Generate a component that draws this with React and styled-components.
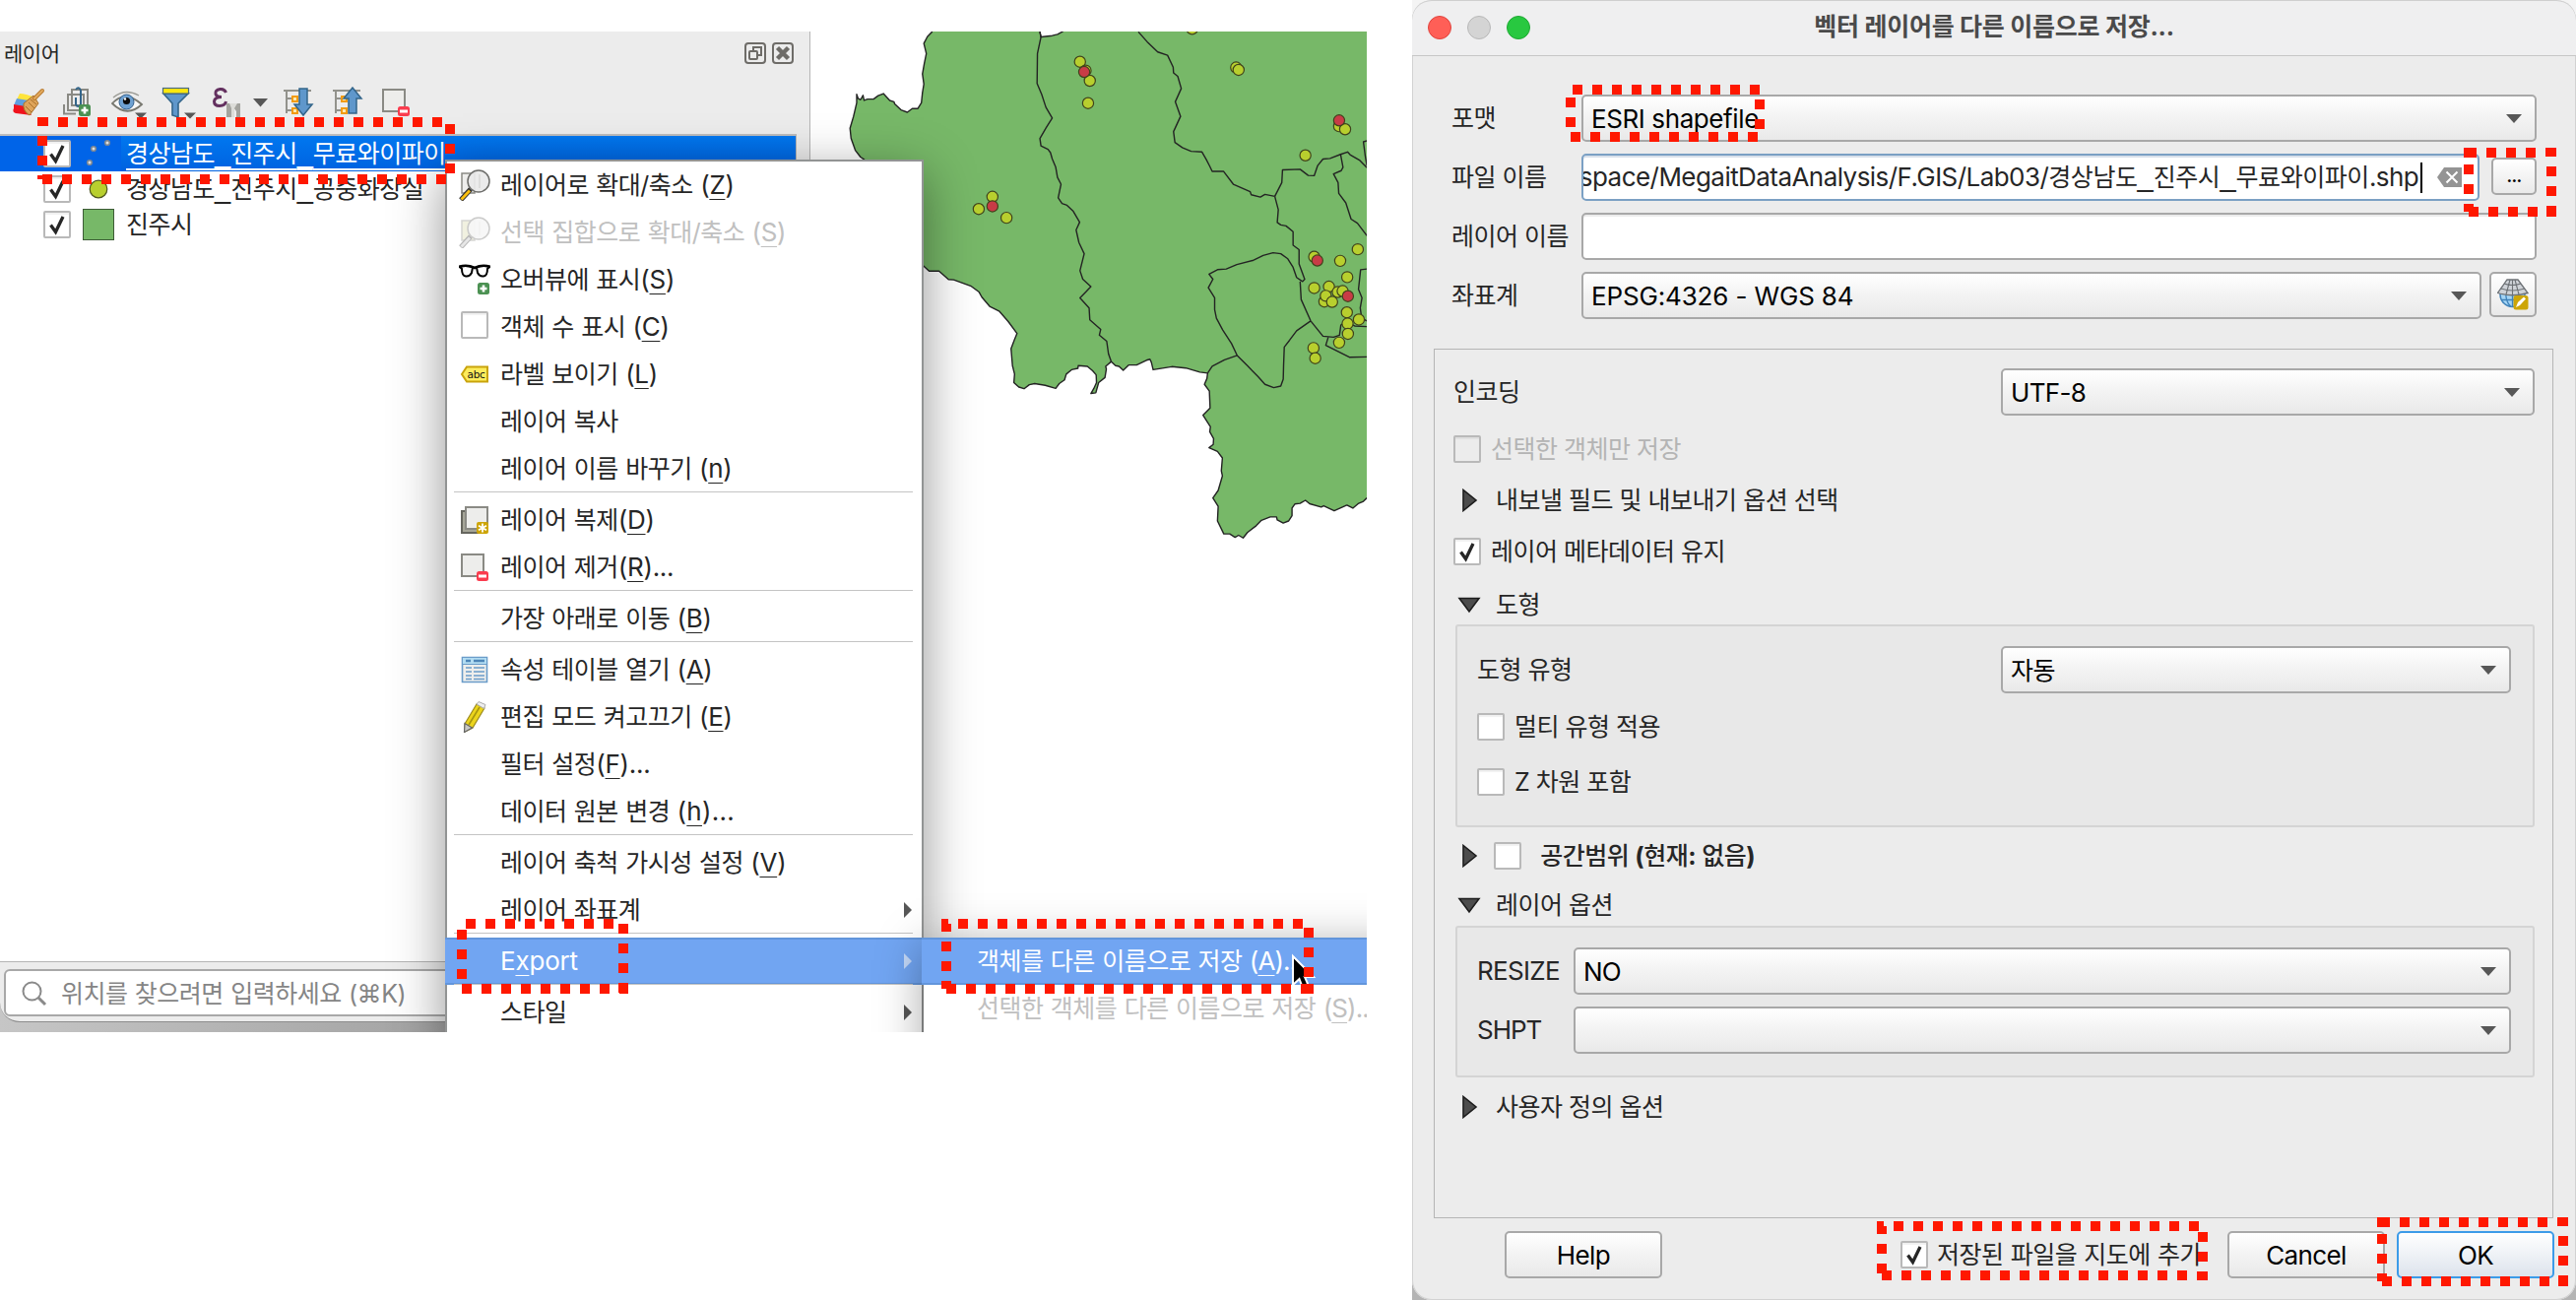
import React from "react";
import styled, { createGlobalStyle, css } from "styled-components";

const GlobalStyle = createGlobalStyle`
  * { box-sizing: border-box; }
  body {
    margin: 0;
    background: #fff;
    color: #262626;
    font: 25px/1 Inter, "Noto Sans CJK KR", sans-serif;
    letter-spacing: -0.5px;
    word-spacing: 0.8px;
    white-space: pre;
    overflow: hidden;
  }
`;

/* ---------- shared ---------- */

const Page = styled.main`
  position: relative;
  display: flex;
  width: 2616px;
  height: 1320px;
  gap: 46px;
`;

const Text = styled.span`
  line-height: 36px;
  color: ${(p) => p.$color || "inherit"};
  font-weight: ${(p) => p.$weight || 400};
`;

const Latin = styled.span`
  font-size: 26px;
  letter-spacing: ${(p) => (p.$track === undefined ? -0.4 : p.$track)}px;
`;

const Low = styled.span`
  font: 29px/0 "Liberation Sans", sans-serif;
  letter-spacing: 0;
`;

const Heavy = styled.span`
  font-weight: 700;
`;

const Key = styled.span`
  text-decoration: underline;
  text-decoration-thickness: 1px;
  text-underline-offset: 5px;
`;

const Box = styled.span`
  display: inline-flex;
  align-items: center;
  justify-content: center;
  flex: none;
  width: 28px;
  height: 28px;
  border: 2px solid #b9b9b9;
  border-radius: 2px;
  background: ${(p) => (p.$disabled ? "#ececec" : "#fff")};
  box-shadow: inset 0 2px 1px rgba(0, 0, 0, 0.06);
`;

function Check({ checked, disabled }) {
  return (
    <Box $disabled={disabled}>
      {checked && (
        <svg width="20" height="22" viewBox="0 0 20 22">
          <path d="M3.5 11.5 L8.5 18.5 L16 3" fill="none" stroke="#262626" strokeWidth="3.3" />
        </svg>
      )}
    </Box>
  );
}

/* ---------- layers window ---------- */

const Shot = styled.section`
  position: relative;
  display: flex;
  flex: none;
  width: 1388px;
  height: 1016px;
  margin-top: 32px;
  overflow: hidden;
  background: #fff;
`;

const Dock = styled.div`
  display: flex;
  flex-direction: column;
  flex: none;
  width: 823px;
  background: #ececec;
  border-right: 1px solid #b5b5b5;
`;

const DockTitle = styled.header`
  display: flex;
  align-items: center;
  height: 44px;
  padding: 0 16px 0 4px;
  font-size: 21px;
  gap: 6px;
`;

const DockName = styled.span`
  flex: 1;
`;

const Toolbar = styled.div`
  display: flex;
  height: 60px;
  padding: 12px 0 0 12px;
`;

const Tool = styled.span`
  flex: none;
  width: ${(p) => p.$w}px;
`;

const Tree = styled.div`
  width: 809px;
  height: 841px;
  border-top: 2px solid #bdbdbd;
  border-right: 1px solid #b5b5b5;
  border-bottom: 1px solid #b5b5b5;
  background: #fff;
`;

const TreeRow = styled.div`
  display: flex;
  align-items: center;
  height: 36px;
  padding-left: 44px;
  ${(p) =>
    p.$selected &&
    css`
      color: #fff;
      text-decoration: underline;
      text-decoration-thickness: 2px;
      text-underline-offset: 6px;
      background: linear-gradient(90deg, #0064e8 123px, transparent 123px),
        linear-gradient(#0077ef, #0062e0);
    `}
`;

const Symbol = styled.span`
  display: flex;
  justify-content: center;
  width: 56px;
`;

const StatusBar = styled.footer`
  flex: none;
  height: 61px;
  padding: 7px 0 0 4px;
  background: #ececec;
  border-bottom-left-radius: 20px;
  border-bottom: 1px solid #8c8c8c;
`;

const Desk = styled.div`
  display: flex;
  flex-direction: column;
  background: linear-gradient(90deg, #c6c6c6, #a2a2a2 452px);
  height: 71px;
`;

const Search = styled.div`
  display: flex;
  align-items: center;
  gap: 14px;
  height: 48px;
  padding: 1px 0 0 16px;
  border: 2px solid #a8a8a8;
  border-radius: 6px;
  background: #fff;
  color: #858585;
`;

const MapCanvas = styled.div`
  flex: 1;
  background: #fff;
`;

/* ---------- context menu ---------- */

const Menu = styled.nav`
  position: absolute;
  left: 452px;
  top: 130px;
  width: 486px;
  height: 900px;
  padding: 0;
  border: 2px solid #929494;
  background: #fff;
  box-shadow: 0 14px 50px rgba(0, 0, 0, 0.42);
`;

const SubMenu = styled(Menu)`
  left: 938px;
  top: 920px;
  width: 520px;
  height: 200px;
  border: 0;
  box-shadow: 0 8px 44px rgba(0, 0, 0, 0.35);
`;

const MenuRow = styled.div`
  display: flex;
  align-items: center;
  height: 48px;
  padding: 0 10px ${(p) => (p.$sub ? 0 : 1)}px ${(p) => (p.$sub ? 54 : 12)}px;
  color: ${(p) => (p.$disabled ? "#c0c0c0" : "#262626")};
  ${(p) =>
    p.$active &&
    css`
      margin: 0 -2px;
      padding-left: ${p.$sub ? 56 : 14}px;
      padding-right: 12px;
      color: #fff;
      background: #71a5f2;
      box-shadow: inset 0 2px #6295db, inset 0 -2px #6295db;
    `}
`;

const MenuIcon = styled.span`
  width: 32px;
  height: 32px;
  margin: 0 10px 0 0;
`;

const CheckSlot = styled.span`
  padding-left: 2px;
`;

const MenuText = styled(Text)`
  flex: 1;
`;

const Divider = styled.div`
  height: 5px;
  margin: -1px 9px 0 7px;
  border-top: 1px solid #c4c4c4;
`;

/* ---------- dialog ---------- */

const DialogBack = styled.section`
  flex: none;
  width: 1182px;
  height: 1320px;
  background: linear-gradient(#f4f4f4 50%, #b4b4b4 50%);
`;

const Dialog = styled.div`
  display: flex;
  flex-direction: column;
  height: 1320px;
  border-radius: 20px;
  background: #ececec;
  box-shadow: inset 0 0 0 1px #d2d2d2;
  word-spacing: 0;
`;

const TitleBar = styled.header`
  display: flex;
  align-items: center;
  height: 57px;
  padding: 0 16px;
  border-bottom: 1px solid #c6c6c6;
  border-radius: 20px 20px 0 0;
  background: #efeff0;
  box-shadow: inset 0 1px #cfcfcf;
`;

const Light = styled.span`
  width: 24px;
  height: 24px;
  margin-right: 16px;
  border-radius: 50%;
  border: 1px solid ${(p) => p.$edge};
  background: ${(p) => p.$fill};
`;

const Title = styled.h1`
  flex: 1;
  margin: -2px 120px 0 0;
  text-align: center;
  font-size: 25px;
  font-weight: 700;
  letter-spacing: -0.25px;
  color: #4a4a4a;
`;

const Form = styled.div`
  display: flex;
  flex-direction: column;
  gap: 12px;
  padding: 39px 40px 0;
`;

const FormRow = styled.div`
  display: flex;
  height: 48px;
  align-items: center;
`;

const Label = styled(Text)`
  width: ${(p) => p.$w}px;
  flex: none;
`;

const ComboBox = styled.div`
  display: flex;
  align-items: center;
  justify-content: space-between;
  ${(p) => (p.$w ? `width: ${p.$w}px; margin-left: auto;` : "flex: 1;")}
  height: 48px;
  padding: 1px 13px 0 8px;
  border: 2px solid #a8a8a8;
  border-radius: 5px;
  background: linear-gradient(#fff, #f4f4f4 45%, #e9e9e9);
  color: #000;
`;

const Field = styled.div`
  display: flex;
  align-items: center;
  justify-content: flex-end;
  flex: 1;
  min-width: 0;
  height: 48px;
  overflow: hidden;
  padding-right: 16px;
  border: 2px solid ${(p) => (p.$focus ? "#7ba0c4" : "#a8a8a8")};
  border-radius: 5px;
  background: #fff;
  box-shadow: inset 0 2px ${(p) => (p.$focus ? "#d8e0ea" : "#ececec")};

  & > svg {
    flex: none;
  }
`;

const PathText = styled(Text)`
  flex: none;
  letter-spacing: -0.44px;
`;

const Caret = styled.span`
  flex: none;
  width: 2px;
  height: 31px;
  margin: 0 15px 0 2px;
  background: #000;
`;

const SmallButton = styled.button`
  display: flex;
  align-items: center;
  justify-content: center;
  flex: none;
  width: ${(p) => p.$w}px;
  height: ${(p) => p.$h}px;
  margin: 0 0 ${(p) => p.$lift || 0}px ${(p) => p.$gap}px;
  padding: 0;
  border: 2px solid #a8a8a8;
  border-radius: 5px;
  background: linear-gradient(#fff, #e9e9e9);
  font: 700 17px/1 Inter, sans-serif;
  letter-spacing: -0.6px;
  color: #000;
`;

const Panel = styled.div`
  height: 883px;
  margin: 30px 23px 0 22px;
  padding: 19px 18px 0 19px;
  border: 1px solid #b5b5b5;
`;

const Line = styled.div`
  display: flex;
  align-items: center;
  height: ${(p) => p.$h}px;
  padding-left: ${(p) => p.$indent || 0}px;
  gap: ${(p) => (p.$gap === undefined ? 10 : p.$gap)}px;
  & > ${Text} {
    padding-bottom: 1px;
  }
`;

const Group = styled.div`
  margin-left: 2px;
  height: ${(p) => p.$h}px;
  padding: 20px 22px 0 20px;
  border: 2px solid #d4d4d4;
  border-radius: 3px;
  background: #e8e8e8;
`;

const Footer = styled.footer`
  display: flex;
  height: 48px;
  align-items: center;
  margin: 13px 22px 0 94px;
`;

const Button = styled.button`
  width: 160px;
  height: 48px;
  margin: 0 0 0 ${(p) => p.$gap || 0}px;
  padding: 1px 0 0;
  border: 2px solid ${(p) => (p.$primary ? "#3c9be8" : "#a8a8a8")};
  border-radius: 5px;
  background: ${(p) =>
    p.$primary ? "linear-gradient(#fff, #f0f3f7 45%, #dde3ec)" : "linear-gradient(#fff, #f4f4f4 45%, #e9e9e9)"};
  font: inherit;
  font-size: 26px;
  letter-spacing: -0.6px;
  color: #000;
`;

const AddToMap = styled.label`
  display: flex;
  align-items: center;
  width: 332px;
  gap: 9px;
  margin-left: 242px;
  word-spacing: 0.6px;
`;

const Overlay = styled.svg`
  position: absolute;
  left: 0;
  top: 0;
  pointer-events: none;
`;

/* ---------- drawings ---------- */

const Down = () => (
  <svg width="16" height="9" viewBox="0 0 16 9">
    <path d="M0 0H16L8 9Z" fill="#575757" />
  </svg>
);

const Combo = ({ w, track, children }) => (
  <ComboBox $w={w}>
    <Text>{track === undefined ? children : <Latin $track={track}>{children}</Latin>}</Text>
    <Down />
  </ComboBox>
);

const Disclosure = ({ open }) => (
  <svg width="24" height="24" viewBox="0 0 24 24">
    <path
      d={open ? "M2 5.5H22L12 19Z" : "M6 1.5V22.5L19 12Z"}
      fill="#4c4c4c"
      stroke="#1d1d1d"
      strokeWidth="1.6"
    />
  </svg>
);

const RightArrow = ({ color }) => (
  <svg width="8" height="16" viewBox="0 0 8 16">
    <path d="M0 0L8 8L0 16Z" fill={color} />
  </svg>
);

const FloatIcon = () => (
  <svg width="22" height="22" viewBox="0 0 22 22" fill="none" stroke="#6e6c68" strokeWidth="2">
    <rect x="1" y="1" width="20" height="20" rx="3" />
    <rect x="5" y="9" width="8" height="8" rx="1" />
    <path d="M9 9V5H17V13H13" />
  </svg>
);

const CloseIcon = () => (
  <svg width="22" height="22" viewBox="0 0 22 22" fill="none" stroke="#6e6c68" strokeWidth="2">
    <rect x="1" y="1" width="20" height="20" rx="3" />
    <path d="M5.5 5.5L16.5 16.5M16.5 5.5L5.5 16.5" strokeWidth="4.4" />
  </svg>
);

const Svg = (p) => (
  <svg width={p.w} height="34" viewBox={`0 0 ${p.w} 34`} fill="none">
    {p.children}
  </svg>
);

const BrushIcon = () => (
  <Svg w={34}>
    <path d="M8 7Q14 7 26 12L16 20L5 13Z" fill="#ffe43c" />
    <path d="M5 12L17 14L13 22L2 19Z" fill="#5f9fe0" />
    <path d="M2 18L14 20L20 29L4 27Q0 26 2 22Z" fill="#f0121c" />
    <path d="M12 17L22 9L27 17L18 29Q11 25 12 17Z" fill="#dfa45a" stroke="#a8702a" />
    <path d="M14 20L20 26M17 16L23 22M19 13L25 18" stroke="#a8702a" />
    <path d="M23 12L31 4" stroke="#b87a2e" strokeWidth="4" strokeLinecap="round" />
    <path d="M23 12L31 4" stroke="#e3aa5e" strokeWidth="2" strokeLinecap="round" />
  </Svg>
);

const Plus = ({ x, y }) => (
  <g>
    <rect x={x} y={y} width="12" height="12" rx="2.5" fill="#4b9152" />
    <path d={`M${x + 6} ${y + 2.5}v7M${x + 2.5} ${y + 6}h7`} stroke="#fff" strokeWidth="2.6" />
  </g>
);

const AddGroupIcon = () => (
  <Svg w={34}>
    <path d="M3 18V27.500H15" stroke="#8a8a84" strokeWidth="2" />
    <rect x="7" y="8" width="16" height="16" stroke="#8a8a84" strokeWidth="2" />
    <rect x="11" y="3" width="16" height="16" stroke="#8a8a84" strokeWidth="2" />
    <path d="M15 11V18Q17 22 20 18V4Q18 -1 15 3" stroke="#33658a" strokeWidth="2" />
    <Plus x={18} y={18} />
  </Svg>
);

const EyeIcon = () => (
  <Svg w={38}>
    <path d="M1 17Q14 3 31 18Q16 32 1 17Z" fill="#f7f7f7" stroke="#77776f" strokeWidth="1.8" />
    <path d="M2 11Q14 1 28 9" stroke="#9a9a94" strokeWidth="1.4" />
    <circle cx="15.500" cy="15.500" r="7.500" fill="#6ea1d2" stroke="#33608c" />
    <circle cx="15.500" cy="14.500" r="3.600" fill="#0a0a0a" />
    <circle cx="14" cy="12.500" r="1.200" fill="#fff" />
    <path d="M24 26.500H36L30 32.500Z" fill="#575757" />
  </Svg>
);

const FilterIcon = () => (
  <Svg w={38}>
    <path d="M2 7L11 17V29L17 31V17L27 7Z" fill="#5f97cb" stroke="#33658a" strokeWidth="1.6" />
    <rect x="1.500" y="1.500" width="26" height="5.500" fill="#fce80d" stroke="#4a6a80" strokeWidth="1.200" />
    <path d="M23 26.500H35L29 32.500Z" fill="#575757" />
  </Svg>
);

const EpsilonIcon = () => (
  <Svg w={58}>
    <path
      d="M14.500 6Q13 2 8.500 2.500Q3 3.500 4 7.500Q5 10.500 10 10.500Q3 10.500 2.500 15Q2.500 19.500 8 19.500Q13.500 19.500 14.500 15"
      stroke="#63305f"
      strokeWidth="3"
    />
    <path d="M15 17H29V31H25V25L20 18V31H15Z" fill="#a3a39e" />
    <path d="M18 17H26L23 22V31H20V22Z" fill="#dcdcd8" />
    <path d="M42 12H57L49.500 20.500Z" fill="#575757" />
  </Svg>
);

const TreeIcon = ({ up }) => (
  <Svg w={34}>
    <path d="M0 4H28M3 4V27M3 12H8M3 24H8" stroke="#92928c" strokeWidth="2" />
    <rect x="9" y="10" width="5" height="5" stroke="#f29b11" strokeWidth="2" fill="#fce9b0" />
    <rect x="9" y="22" width="5" height="5" stroke="#f29b11" strokeWidth="2" fill="#fce9b0" />
    <path
      d={up ? "M20 1L29 12H24V27H16V12H11Z" : "M16 2H24V18H29L20 29L11 18H16Z"}
      fill="#5f97cb"
      stroke="#33658a"
      strokeWidth="1.500"
    />
  </Svg>
);

const RemoveIcon = () => (
  <Svg w={32}>
    <rect x="2" y="3" width="22" height="22" fill="#ededeb" stroke="#8a8a84" strokeWidth="2" />
    <rect x="17" y="20" width="12" height="10" rx="2.500" fill="#fa3c4e" />
    <rect x="19" y="23.500" width="8" height="3" fill="#fff" />
  </Svg>
);

const ZoomIcon = ({ faded }) => (
  <svg width="32" height="32" viewBox="0 0 32 32" fill="none" opacity={faded ? 0.35 : 1}>
    <path d="M3 4H16V24H3Z" fill={faded ? "#d9d9a8" : "#eeeeec"} stroke="#8a8a84" strokeWidth="1.500" />
    <path d="M12 20L2 31" stroke="#333" strokeWidth="5" />
    <path d="M11 21.500L2.500 30.500" stroke={faded ? "#bbb" : "#fcc00d"} strokeWidth="2.800" />
    <circle cx="20" cy="12" r="11" fill="#e9e9e9" fillOpacity="0.92" stroke="#6d6d6a" strokeWidth="1.500" />
    <path d="M21 5V19" stroke="#cfcfcc" />
  </svg>
);

const GlassesIcon = () => (
  <svg width="32" height="32" viewBox="0 0 32 32" fill="none">
    <path d="M1 3Q7 1 14 3.500L13 9Q11 13 7 12.500Q3 12 3 5ZM18 3.500Q25 1 31 3L29 5Q29 12 25 12.500Q21 13 19 9Z" stroke="#000" strokeWidth="2" />
    <path d="M0 3Q8 0 16 4Q24 0 32 3" stroke="#000" strokeWidth="2.600" />
    <Plus x={19} y={19} />
  </svg>
);

const LabelIcon = () => (
  <svg width="32" height="32" viewBox="0 0 32 32">
    <path d="M3 16L8 8.500H29V23.500H8Z" fill="#fcec5c" stroke="#c9a30b" strokeWidth="2" />
    <text x="8.500" y="20" fontFamily="DejaVu Sans" fontSize="10.500" letterSpacing="-0.3" fill="#111">abc</text>
  </svg>
);

const DuplicateIcon = () => (
  <svg width="32" height="32" viewBox="0 0 32 32">
    <path d="M3 7H22V29H3Z" fill="#a6a698" stroke="#66665e" strokeWidth="2" />
    <path d="M7 3H29V25H7Z" fill="#ededeb" stroke="#8a8a84" strokeWidth="2" />
    <rect x="18" y="18" width="12" height="12" rx="2" fill="#cda507" />
    <path d="M24 19.500V28.500M20 21.700L28 26.300M28 21.700L20 26.300" stroke="#fff" strokeWidth="1.800" />
  </svg>
);

const RemoveLayerIcon = () => (
  <svg width="32" height="32" viewBox="0 0 32 32">
    <path d="M3 3H25V25H3Z" fill="#ededeb" stroke="#8a8a84" strokeWidth="2" />
    <rect x="18" y="20" width="12" height="10" rx="2.500" fill="#fa3c4e" />
    <rect x="20" y="23.500" width="8" height="3" fill="#fff" />
  </svg>
);

const TableIcon = () => (
  <svg width="32" height="32" viewBox="0 0 32 32">
    <path d="M3.500 3.500H28.500V28.500H3.500Z" fill="#eeeeec" stroke="#6a9cc9" strokeWidth="1.600" />
    <path d="M4 4H28V10H4Z" fill="#b2dcf2" />
    <path d="M7 7H12M15 7H26" stroke="#4e86b8" strokeWidth="2.400" />
    <path d="M4 10.500H28" stroke="#6a9cc9" />
    <path d="M7 14H13M15 14H26M7 18H13M15 18H26M7 22H13M15 22H26M7 25.500H13M15 25.500H26" stroke="#6a9cc9" strokeWidth="1.600" />
  </svg>
);

const PencilIcon = () => (
  <svg width="32" height="32" viewBox="0 0 32 32">
    <path d="M6 23L18 3L26 7L14 27L6 31Z" fill="#ecd51c" stroke="#9c8a1e" strokeWidth="1.200" />
    <path d="M10 24L21 6" stroke="#a8960f" strokeWidth="1.600" />
    <path d="M18 3L20 0.500L27 3.500L25.500 7.500Z" fill="#eee" stroke="#aaa" />
    <path d="M6 22.500L13.500 27L5.500 31.500Z" fill="#c9c9c5" stroke="#666" strokeWidth="1.200" />
  </svg>
);

const SearchIcon = () => (
  <svg width="26" height="26" viewBox="0 0 26 26" fill="none" stroke="#8a8a8a" strokeWidth="2">
    <circle cx="10.500" cy="10.500" r="9" />
    <path d="M17 17L24 24" strokeWidth="3" />
  </svg>
);

const ClearIcon = () => (
  <svg width="25" height="20" viewBox="0 0 25 20">
    <path d="M7 0H25V20H7L0 10Z" fill="#949494" />
    <path d="M9.500 4.500L20.500 15.500M20.500 4.500L9.500 15.500" stroke="#fff" strokeWidth="2" />
  </svg>
);

const CrsIcon = () => (
  <svg width="32" height="32" viewBox="0 0 32 32" fill="none">
    <circle cx="15.500" cy="16" r="12.500" fill="#a5d5f5" stroke="#3f82ba" strokeWidth="1.500" />
    <path d="M15.500 14V29M9 14Q8 23 14 28.500M4 21.500H24" stroke="#3f82ba" strokeWidth="1.300" />
    <path d="M10 1H21L31 14.500Q15 19 0.500 14.500Z" fill="#cfd3d8" stroke="#6e7276" strokeWidth="1.300" />
    <path d="M7 5Q15 8 24 5M4 10Q15 14 28 10M13 1L9 16M18 1L22 16M15.500 1V17" stroke="#6e7276" strokeWidth="1.100" />
    <rect x="16.500" y="17" width="15" height="14.500" rx="2.500" fill="#cda507" />
    <path d="M19 29L21 24L27 18.500L29 20.500L23 27Z" fill="#fff" />
  </svg>
);

const PointsSymbol = () => (
  <svg width="32" height="32" viewBox="0 0 32 32" fill="#ddd" stroke="#7b8794" strokeWidth="1.600">
    <circle cx="7" cy="25" r="2.300" />
    <circle cx="11" cy="11" r="2.300" />
    <circle cx="25" cy="5" r="2.300" />
  </svg>
);

const CircleSymbol = () => (
  <svg width="20" height="20" viewBox="0 0 20 20">
    <circle cx="10" cy="10" r="8.800" fill="#b8cf2e" stroke="#4e561e" strokeWidth="1.200" />
  </svg>
);

const PolygonSymbol = () => (
  <svg width="32" height="32" viewBox="0 0 32 32">
    <rect x="0.500" y="0.500" width="31" height="31" fill="#77b868" stroke="#3d5c36" />
  </svg>
);

const DISTRICT =
  "M298 36L285 50L275 70L282 100L276 130L271 160L275 190L271 215L268 245L258 262L242 262L228 273L210 266L192 248L190 242L178 238L160 218L145 224L132 234L115 234L105 238L102 223L95 236L88 232L84 220L84 245L75 285L65 320L68 350L80 385L95 405L105 412L150 500L200 640L274 726L290 741L318 741L330 752L345 766L360 767L410 786L432 803L440 818L462 845L490 860L515 890L540 925L532 945L523 970L527 1020L533 1045L531 1070L545 1083L560 1088L575 1076L590 1073L620 1078L650 1087L660 1073L675 1062L680 1045L695 1032L713 1028L714 1020L740 1022L755 1035L765 1047L766 1070L758 1088L750 1102L764 1100L772 1070L790 1055L794 1030L792 1022L808 1008L820 1020L830 1022L842 1034L858 1018L880 1018L908 1004L918 1001L922 1010L927 1032L980 1023L1020 1027L1060 1039L1082 1042L1080 1058L1073 1075L1087 1095L1089 1145L1069 1166L1090 1200L1088 1215L1099 1235L1098 1252L1086 1262L1110 1273L1124 1292L1121 1330L1124 1345L1112 1388L1097 1410L1112 1435L1110 1478L1128 1516L1145 1516L1160 1526L1170 1520L1183 1528L1195 1512L1220 1492L1235 1476L1260 1466L1278 1466L1280 1475L1297 1484L1312 1478L1322 1462L1322 1440L1330 1428L1345 1426L1360 1417L1372 1427L1405 1437L1412 1433L1442 1448L1478 1431L1495 1440L1510 1427L1525 1420L1535 1410L1560 1400L1560 20L690 20L668 36L655 43L640 47L608 51L605 36L600 20L300 20Z";

const BOUNDARIES = [
  "M605 36L608 51L598 100L597 188L610 220L622 258L640 290L622 320L605 350L608 372L628 382L635 392L640 410L650 435L655 465L665 485L657 525L668 542L682 547L700 565L718 597L708 620L716 657L731 690L719 740L727 765L750 787L738 800L719 820L745 850L747 885L778 913L774 930L795 948L800 985L808 1008",
  "M885 36L910 65L940 95L968 105L984 140L985 157L997 167L1007 203L990 242L1005 285L985 330L989 362L1010 377L1035 388L1066 390L1078 412L1088 432L1095 447L1127 447L1155 485L1203 507L1206 516L1232 523L1245 515L1273 521",
  "M1273 521L1293 480L1295 443L1345 441L1368 459L1385 460L1395 430L1410 411L1430 409L1460 397L1480 390L1487 398L1515 415L1535 436",
  "M1460 397L1467 435L1462 445L1440 455L1453 480L1455 512L1475 540L1490 588L1508 600L1535 637",
  "M1273 521L1283 560L1280 598L1290 605L1305 608L1325 625L1325 665L1342 678L1342 720L1358 765L1352 772L1335 760L1325 730L1310 705L1290 690L1268 687L1240 695L1210 710L1165 722L1135 735L1110 737L1086 750L1097 765L1084 790L1102 820L1102 855L1107 880L1125 915L1150 955L1166 990L1195 1020L1225 1052L1245 1075L1270 1085L1290 1080L1297 1060L1298 1020L1300 965L1315 945L1335 917L1375 888",
  "M1345 772L1348 825L1375 888L1410 933L1440 936L1457 930L1461 900L1475 890L1500 903L1535 905",
  "M1425 936L1418 960L1485 995L1535 994",
  "M1082 1042L1095 1022L1130 1003L1166 990",
  "M1535 735L1517 737L1511 795L1521 820L1516 850L1520 880L1535 888",
  "M1535 357L1525 360L1530 400L1535 430",
];

const TOILETS = [
  [719, 124], [735, 150], [747, 180], [742, 246], [1038, 27], [1163, 141], [1170, 148], [1456, 314], [1473, 323],
  [1360, 400], [470, 522], [431, 558], [510, 584], [1385, 699], [1459, 711], [1509, 677], [1479, 759], [1385, 791],
  [1427, 787], [1452, 803], [1466, 800], [1414, 831], [1418, 814], [1436, 832], [1478, 863], [1512, 884],
  [1480, 896], [1481, 926], [1456, 952], [1383, 968], [1388, 998],
];

const WIFI = [[731, 154], [1456, 297], [470, 550], [1394, 710], [1481, 815]];

const Pin = ({ at, fill }) => (
  <ellipse cx={at[0]} cy={at[1]} rx="15.700" ry="16.300" fill={fill} stroke="#40431c" strokeWidth="1.200" vectorEffect="non-scaling-stroke" />
);

const JinjuMap = () => (
  <svg width="565" height="1016" viewBox="823 32 565 1016" strokeLinejoin="round">
    <g transform="translate(840 20) scale(0.3571 0.3444)">
      <path d={DISTRICT} fill="#77b868" stroke="#232323" strokeWidth="1.400" vectorEffect="non-scaling-stroke" />
      {BOUNDARIES.map((d) => (
        <path key={d} d={d} fill="none" stroke="#232323" strokeWidth="1.400" vectorEffect="non-scaling-stroke" />
      ))}
      {TOILETS.map((p) => (
        <Pin key={p.join()} at={p} fill="#b8cf2e" />
      ))}
      {WIFI.map((p) => (
        <Pin key={p.join()} at={p} fill="#c83c46" />
      ))}
    </g>
  </svg>
);

const Cursor = () => (
  <path d="M1313 971V1000L1319.500 994L1324 1006L1330 1003.500L1325 992H1334Z" fill="#000" stroke="#fff" strokeWidth="2" />
);

/* Each entry is a run of 10px squares: x, y, count, direction */
const RUNS = [
  [59, 119, 20, "h"], [43, 177, 21, "h"], [452, 126, 3, "v"], [38, 138, 2, "v"],
  [473, 933, 8, "h"], [469, 999, 8, "h"], [628, 938, 4, "v"], [464, 944, 3, "v"],
  [973, 933, 18, "h"], [961, 999, 18, "h"], [1324, 942, 3, "v"], [956, 956, 2, "v"],
  [1597, 86, 10, "h"], [1595, 134, 10, "h"], [1782, 101, 2, "v"], [1590, 99, 2, "v"],
  [2525, 150, 3, "h"], [2507, 210, 4, "h"], [2586, 169, 2, "v"], [2502, 167, 2, "v"],
  [1923, 1240, 16, "h"], [1911, 1290, 16, "h"], [2232, 1251, 2, "v"], [1906, 1263, 2, "v"],
  [2437, 1236, 8, "h"], [2419, 1296, 9, "h"], [2598, 1255, 2, "v"], [2414, 1253, 2, "v"],
];

/* Clipped squares where two sides meet: x, y, width, height */
const CORNERS = [
  [38, 119, 11, 9], [38, 178, 5, 4],
  [629, 999, 9, 10],
  [956, 933, 7, 10], [956, 938, 10, 8], [956, 996, 10, 8], [1321, 999, 13, 10],
  [2502, 150, 13, 10], [2502, 150, 10, 7], [2585, 150, 11, 9], [2502, 207, 10, 8], [2586, 209, 10, 11],
  [1906, 1240, 7, 10], [1906, 1245, 10, 8], [1906, 1283, 10, 10], [2231, 1291, 11, 9],
  [2414, 1236, 13, 10], [2597, 1236, 11, 9], [2598, 1295, 10, 11], [2414, 1293, 10, 8],
];

const Highlights = () => (
  <Overlay width="2616" height="1320" viewBox="0 0 2616 1320">
    <Cursor />
    <g fill="#ff1800" shapeRendering="crispEdges">
      {RUNS.flatMap(([x, y, n, dir]) =>
        Array.from({ length: n }, (_, i) => (
          <rect
            key={`${x}-${y}-${i}`}
            x={dir === "h" ? x + i * 20 : x}
            y={dir === "v" ? y + i * 20 : y}
            width="10"
            height="10"
          />
        ))
      )}
      {CORNERS.map(([x, y, w, h]) => (
        <rect key={`${x}-${y}-${w}-${h}`} x={x} y={y} width={w} height={h} />
      ))}
    </g>
  </Overlay>
);

/* ---------- data ---------- */

const TOOLS = [
  [BrushIcon, 50], [AddGroupIcon, 51], [EyeIcon, 51], [FilterIcon, 51], [EpsilonIcon, 73],
  [TreeIcon, 50], [() => <TreeIcon up />, 49], [RemoveIcon, 32],
];

/* t: text before the mnemonic tail, opening part, mnemonic letter, rest */
const MENU = [
  { icon: <ZoomIcon />, t: ["레이어로 확대/축소 ", "(", "Z", ")"] },
  { icon: <ZoomIcon faded />, t: ["선택 집합으로 확대/축소 ", "(", "S", ")"], disabled: true },
  { icon: <GlassesIcon />, t: ["오버뷰에 표시", "(", "S", ")"] },
  { icon: <CheckSlot><Check /></CheckSlot>, t: ["객체 수 표시 ", "(", "C", ")"] },
  { icon: <LabelIcon />, t: ["라벨 보이기 ", "(", "L", ")"] },
  { t: ["레이어 복사"] },
  { t: ["레이어 이름 바꾸기 ", "(", "n", ")"] },
  null,
  { icon: <DuplicateIcon />, t: ["레이어 복제", "(", "D", ")"] },
  { icon: <RemoveLayerIcon />, t: ["레이어 제거", "(", "R", ")..."] },
  null,
  { t: ["가장 아래로 이동 ", "(", "B", ")"] },
  null,
  { icon: <TableIcon />, t: ["속성 테이블 열기 ", "(", "A", ")"] },
  { icon: <PencilIcon />, t: ["편집 모드 켜고끄기 ", "(", "E", ")"] },
  { t: ["필터 설정", "(", "F", ")..."] },
  { t: ["데이터 원본 변경 ", "(", "h", ")..."], track: 0.3 },
  null,
  { t: ["레이어 축척 가시성 설정 ", "(", "V", ")"] },
  { t: ["레이어 좌표계"], arrow: "#575757" },
  null,
  { t: ["", "E", "x", "port"], arrow: "#c3d8f8", active: true, track: -0.2 },
  null,
  { t: ["스타일"], arrow: "#575757" },
];

const Mnemonic = ({ t, track = -0.3 }) => (
  <MenuText>
    {t[0]}
    {t[2] && (
      <Latin $track={track}>
        {t[1]}
        <Key>{t[2]}</Key>
        {t[3]}
      </Latin>
    )}
  </MenuText>
);

export default function App() {
  return (
    <Page>
      <GlobalStyle />
      <Shot>
        <Dock>
          <DockTitle>
            <DockName>레이어</DockName>
            <FloatIcon />
            <CloseIcon />
          </DockTitle>
          <Toolbar>
            {TOOLS.map(([Icon, w], i) => (
              <Tool key={i} $w={w}>
                <Icon />
              </Tool>
            ))}
          </Toolbar>
          <Tree>
            <TreeRow $selected>
              <Check checked />
              <Symbol><PointsSymbol /></Symbol>
              <Text>경상남도<Low>_</Low>진주시<Low>_</Low>무료와이파이</Text>
            </TreeRow>
            <TreeRow>
              <Check checked />
              <Symbol><CircleSymbol /></Symbol>
              <Text>경상남도<Low>_</Low>진주시<Low>_</Low>공중화장실</Text>
            </TreeRow>
            <TreeRow>
              <Check checked />
              <Symbol><PolygonSymbol /></Symbol>
              <Text>진주시</Text>
            </TreeRow>
          </Tree>
          <Desk>
            <StatusBar>
              <Search>
                <SearchIcon />
                <Text>위치를 찾으려면 입력하세요 (⌘K)</Text>
              </Search>
            </StatusBar>
          </Desk>
        </Dock>
        <MapCanvas>
          <JinjuMap />
        </MapCanvas>
        <Menu>
          {MENU.map((m, i) =>
            m ? (
              <MenuRow key={i} $disabled={m.disabled} $active={m.active}>
                <MenuIcon>{m.icon}</MenuIcon>
                <Mnemonic t={m.t} track={m.track} />
                {m.arrow && <RightArrow color={m.arrow} />}
              </MenuRow>
            ) : (
              <Divider key={i} />
            )
          )}
        </Menu>
        <SubMenu>
          <MenuRow $sub $active>
            <Mnemonic t={["객체를 다른 이름으로 저장 ", "(", "A", ")..."]} track={-0.9} />
          </MenuRow>
          <MenuRow $sub $disabled>
            <Mnemonic t={["선택한 객체를 다른 이름으로 저장 ", "(", "S", ")..."]} track={-0.9} />
          </MenuRow>
        </SubMenu>
      </Shot>

      <DialogBack>
        <Dialog>
          <TitleBar>
            <Light $fill="#ff5f57" $edge="#e0443e" />
            <Light $fill="#d4d4d4" $edge="#b8b8b8" />
            <Light $fill="#28c840" $edge="#1fa833" />
            <Title>벡터 레이어를 다른 이름으로 저장...</Title>
          </TitleBar>
          <Form>
            <FormRow>
              <Label $w={132}>포맷</Label>
              <Combo track={-0.4}>ESRI shapefile</Combo>
            </FormRow>
            <FormRow>
              <Label $w={132}>파일 이름</Label>
              <Field $focus>
                <PathText>
                  <Latin $track={-0.55}>space/MegaitDataAnalysis/F.GIS/Lab03/</Latin>
                  경상남도<Low>_</Low>진주시<Low>_</Low>무료와이파이
                  <Latin $track={-0.6}>.shp</Latin>
                </PathText>
                <Caret />
                <ClearIcon />
              </Field>
              <SmallButton $w={46} $h={38} $gap={12} $lift={2}>...</SmallButton>
            </FormRow>
            <FormRow>
              <Label $w={132}>레이어 이름</Label>
              <Field />
            </FormRow>
            <FormRow>
              <Label $w={132}>좌표계</Label>
              <Combo track={-0.15}>EPSG:4326 - WGS 84</Combo>
              <SmallButton $w={48} $h={46} $gap={8} $lift={2}><CrsIcon /></SmallButton>
            </FormRow>
          </Form>
          <Panel>
            <Line $h={48}>
              <Text>인코딩</Text>
              <Combo w={542} track={-0.7}>UTF-8</Combo>
            </Line>
            <Line $h={68}>
              <Check disabled />
              <Text $color="#b4b4b4">선택한 객체만 저장</Text>
            </Line>
            <Line $h={36} $indent={4} $gap={15}>
              <Disclosure />
              <Text>내보낼 필드 및 내보내기 옵션 선택</Text>
            </Line>
            <Line $h={68}>
              <Check checked />
              <Text>레이어 메타데이터 유지</Text>
            </Line>
            <Line $h={40} $indent={4} $gap={15}>
              <Disclosure open />
              <Text>도형</Text>
            </Line>
            <Group $h={206}>
              <Line $h={48}>
                <Text>도형 유형</Text>
                <Combo w={518}>자동</Combo>
              </Line>
              <Line $h={68}>
                <Check />
                <Text>멀티 유형 적용</Text>
              </Line>
              <Line $h={44}>
                <Check />
                <Text>Z 차원 포함</Text>
              </Line>
            </Group>
            <Line $h={58} $indent={4} $gap={13}>
              <Disclosure />
              <Check />
              <Text $weight={500}>
                {" "}공간범위 <Heavy>(</Heavy>현재<Heavy>:</Heavy> 없음<Heavy>)</Heavy>
              </Text>
            </Line>
            <Line $h={42} $indent={4} $gap={15}>
              <Disclosure open />
              <Text>레이어 옵션</Text>
            </Line>
            <Group $h={154}>
              <Line $h={48} $gap={0}>
                <Label $w={98}><Latin $track={-0.7}>RESIZE</Latin></Label>
                <Combo track={-0.8}>NO</Combo>
              </Line>
              <Line $h={72} $gap={0}>
                <Label $w={98}><Latin $track={-1}>SHPT</Latin></Label>
                <Combo />
              </Line>
            </Group>
            <Line $h={60} $indent={4} $gap={15}>
              <Disclosure />
              <Text>사용자 정의 옵션</Text>
            </Line>
          </Panel>
          <Footer>
            <Button>Help</Button>
            <AddToMap>
              <Check checked />
              <Text>저장된 파일을 지도에 추가</Text>
            </AddToMap>
            <Button>Cancel</Button>
            <Button $primary $gap={12}>OK</Button>
          </Footer>
        </Dialog>
      </DialogBack>
      <Highlights />
    </Page>
  );
}
